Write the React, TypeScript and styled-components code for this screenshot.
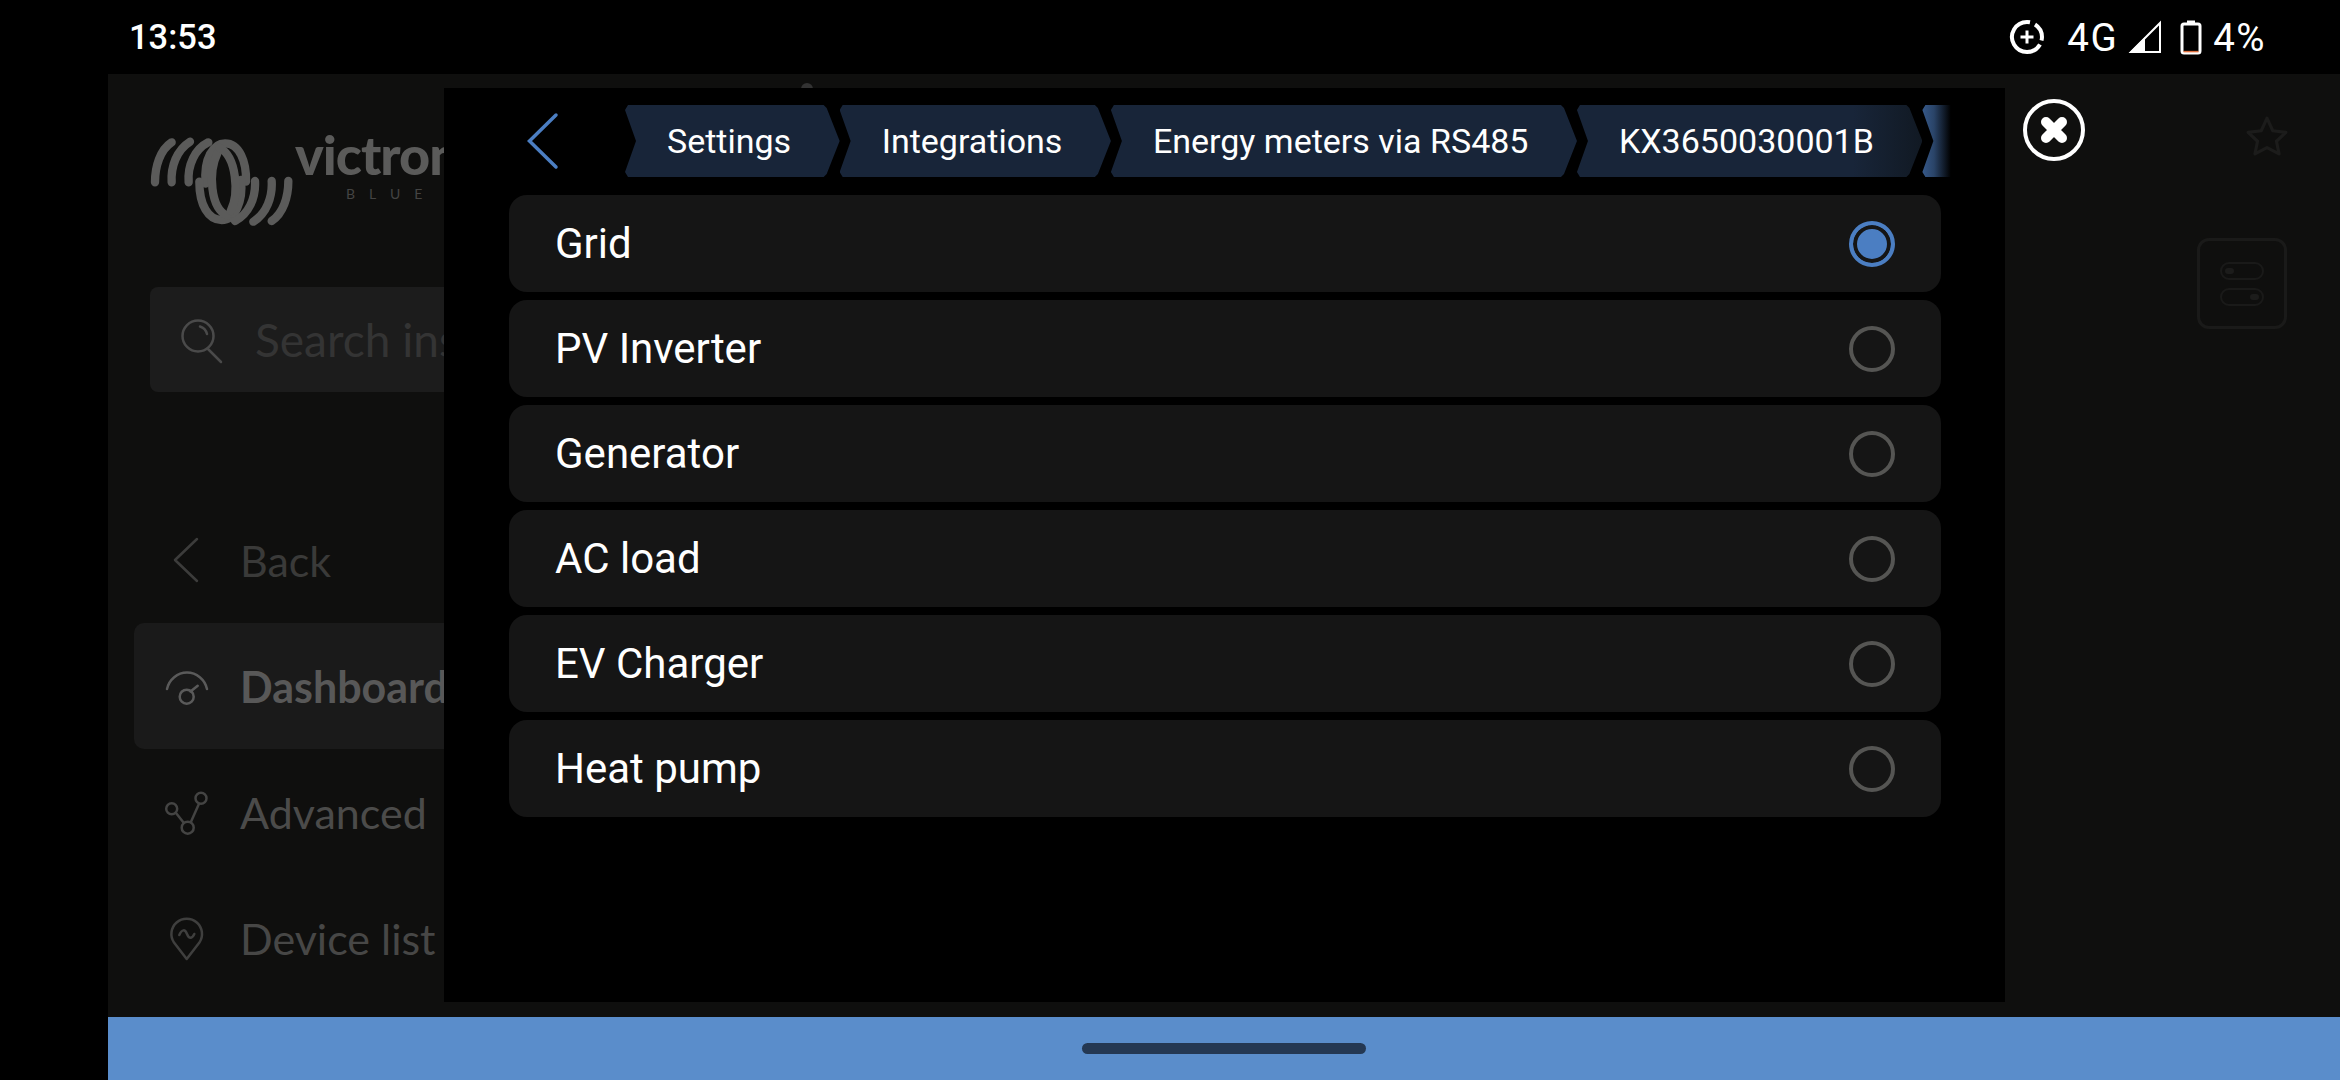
import styled, { createGlobalStyle } from "styled-components";

const GlobalStyle = createGlobalStyle`
  html, body {
    margin: 0;
    background: #000;
    font-family: "Roboto", "Liberation Sans", sans-serif;
  }
`;

const crumbs = ["Settings", "Integrations", "Energy meters via RS485", "KX3650030001B"];
const options = ["Grid", "PV Inverter", "Generator", "AC load", "EV Charger", "Heat pump"];

export default function App() {
  return (
    <Screen>
      <GlobalStyle />
      <StatusBar>
        <Clock>13:53</Clock>
        <StatusIcons>
          <svg width="36" height="36" viewBox="0 0 36 36" fill="none" stroke="#fff">
            <path d="M21 3.3A15 15 0 0 0 18 3 A15 15 0 1 0 31 25.5" strokeWidth="4" />
            <path d="M26 5.5A15 15 0 0 1 33 18 A15 15 0 0 1 32.5 21.5" strokeWidth="4" />
            <path d="M18 11.5V24.5M11.5 18H24.5" strokeWidth="3" />
          </svg>
          <NetworkLabel>4G</NetworkLabel>
          <SignalIcon width="34" height="34" viewBox="0 0 34 34">
            <path d="M1 33 17 17V33Z" fill="#fff" />
            <path d="M3 32 32 3V32Z" fill="none" stroke="#fff" strokeWidth="2" />
          </SignalIcon>
          <svg width="22" height="36" viewBox="0 0 22 36" fill="none">
            <path d="M7 1.5H15V4H7Z" fill="#fff" />
            <rect x="2" y="5" width="18" height="29" rx="2" stroke="#fff" strokeWidth="3" />
            <path d="M3.5 32.6H18.5" stroke="#e0703f" strokeWidth="1.5" />
          </svg>
          <BatteryLabel>4%</BatteryLabel>
        </StatusIcons>
      </StatusBar>

      <Main>
        <Sidebar>
          <LogoRow>
            <LogoMark width="155" height="110" viewBox="0 0 465 330" fill="none" stroke="#5b5b5a" strokeWidth="25" strokeLinecap="round">
              <path d="M45 172C45 125 60 75 95 52" />
              <path d="M95 172C92 125 110 75 150 50" />
              <path d="M146 172C142 120 165 72 205 52" />
              <path d="M197 176C190 100 220 55 255 55C298 55 320 110 318 170" />
              <path d="M178 170C178 240 205 285 245 285C285 285 310 230 303 165" />
              <path d="M232 85C205 140 210 250 262 272" />
              <path d="M272 258C298 205 290 95 238 68" />
              <path d="M445 168C445 215 430 265 395 288" />
              <path d="M395 168C398 215 380 265 340 290" />
              <path d="M345 168C348 220 325 268 285 288" />
            </LogoMark>
            <Wordmark>
              <WordmarkName>victron</WordmarkName>
              <WordmarkTag>BLUE</WordmarkTag>
            </Wordmark>
          </LogoRow>

          <SearchBox>
            <SearchIcon width="48" height="48" viewBox="0 0 48 48" fill="none" stroke="#4a4a4a" strokeWidth="2.5" strokeLinecap="round">
              <circle cx="19" cy="20" r="15.5" />
              <path d="M29 33 42 46" />
              <path d="M21 10.5C24.500 11.500 27 14 28 18" />
            </SearchIcon>
            <SearchText>Search ins</SearchText>
          </SearchBox>

          <NavList>
            <NavItem>
              <NavIcon viewBox="0 0 58 58" $tone="#3c3c3b">
                <path d="M39 8 17 29 39 50" />
              </NavIcon>
              <NavLabel $tone="#3a3a39">Back</NavLabel>
            </NavItem>
            <NavItem $active>
              <NavIcon viewBox="0 0 58 58" $tone="#5a5a5a">
                <path d="M9 32A20.500 21 0 0 1 49 32" />
                <circle cx="28.700" cy="39.700" r="7" />
                <path d="M32.500 34.500 39.700 28.700" />
              </NavIcon>
              <NavLabel $tone="#585858" $bold>Dashboard</NavLabel>
            </NavItem>
            <NavItem>
              <NavIcon viewBox="0 0 58 58" $tone="#444443">
                <circle cx="13.700" cy="25.700" r="5.500" />
                <circle cx="43" cy="15.300" r="5.500" />
                <circle cx="29.700" cy="44.700" r="6" />
                <path d="M18 30 25.500 39.500M33 38.700 41 20.700" />
              </NavIcon>
              <NavLabel $tone="#4b4b4a">Advanced</NavLabel>
            </NavItem>
            <NavItem>
              <NavIcon viewBox="0 0 58 58" $tone="#3f3f3e">
                <path d="M28.700 50 16 33.500A15.300 15.300 0 1 1 41.400 33.500Z" />
                <path d="M21.300 26C24 20 27 20 29 25C31 30 34 30 36.300 25" />
              </NavIcon>
              <NavLabel $tone="#474746">Device list</NavLabel>
            </NavItem>
          </NavList>
        </Sidebar>

        <ToolColumn>
          <svg width="42" height="40" viewBox="0 0 40 38" fill="none" stroke="#1c1c1b" strokeWidth="3" strokeLinejoin="round">
            <path d="M20 2 25.500 14 38 15.500 29 24 31.500 36 20 30 8.500 36 11 24 2 15.500 14.500 14Z" />
          </svg>
          <ToolTile>
            <ToolSwitch $on={false} />
            <ToolSwitch $on />
          </ToolTile>
        </ToolColumn>

        <ShadowDot />

        <Modal>
          <Header>
            <svg width="40" height="60" viewBox="0 0 40 60" fill="none" stroke="#4b7ec2" strokeWidth="3.500" strokeLinecap="round">
              <path d="M29 4 2.500 30 29 56" />
            </svg>
            <Trail>
              {crumbs.map((label, index) => (
                <Crumb key={label} $fading={index === crumbs.length - 1}>
                  {label}
                </Crumb>
              ))}
              <LastCrumb />
            </Trail>
          </Header>

          <OptionList>
            {options.map((label, index) => (
              <Option key={label}>
                <OptionLabel>{label}</OptionLabel>
                <Radio $checked={index === 0} />
              </Option>
            ))}
          </OptionList>
        </Modal>

        <CloseButton>
          <svg width="62" height="62" viewBox="0 0 62 62" fill="none" stroke="#fff" strokeLinecap="round">
            <circle cx="31" cy="31" r="29" strokeWidth="4" />
            <path d="M23 23 39 39M39 23 23 39" strokeWidth="10" />
          </svg>
        </CloseButton>
      </Main>

      <NavBar>
        <HomePill />
      </NavBar>
    </Screen>
  );
}

const Screen = styled.div`
  width: 2340px;
  height: 1080px;
  display: flex;
  flex-direction: column;
  overflow: hidden;
  background: #000;
`;

const StatusBar = styled.div`
  height: 74px;
  flex-shrink: 0;
  display: flex;
  align-items: center;
  justify-content: space-between;
  padding: 0 74px 0 129px;
  color: #fff;
`;

const Clock = styled.span`
  font-size: 34.500px;
  font-weight: 500;
`;

const StatusIcons = styled.div`
  display: flex;
  align-items: center;
`;

const NetworkLabel = styled.span`
  font-size: 38.500px;
  font-weight: 400;
  letter-spacing: 1.500px;
  margin: 0 10px 0 22px;
`;

const SignalIcon = styled.svg`
  margin-right: 18px;
`;

const BatteryLabel = styled.span`
  font-size: 38.500px;
  font-weight: 400;
  letter-spacing: 1.500px;
  margin-left: 11px;
`;

const Main = styled.div`
  position: relative;
  flex: 1;
  margin-left: 108px;
  display: flex;
  justify-content: space-between;
  overflow: hidden;
  background: #0f0f0e;
`;

const Sidebar = styled.div`
  width: 336px;
  box-sizing: border-box;
  padding: 51px 0 0 26px;
  display: flex;
  flex-direction: column;
  overflow: hidden;
  font-family: "Lato", "Open Sans", sans-serif;
`;

const LogoRow = styled.div`
  height: 110px;
  margin-left: 6px;
  display: flex;
`;

const LogoMark = styled.svg`
  flex-shrink: 0;
`;

const Wordmark = styled.div`
  flex-shrink: 0;
  display: flex;
  flex-direction: column;
`;

const WordmarkName = styled.span`
  font-size: 54px;
  line-height: 60px;
  font-weight: 900;
  letter-spacing: -1px;
  color: #5b5b5a;
`;

const WordmarkTag = styled.span`
  margin: 0 0 0 51px;
  font-size: 14px;
  line-height: 18px;
  letter-spacing: 14px;
  color: #444443;
`;

const SearchBox = styled.div`
  height: 105px;
  margin: 52px 0 0 16px;
  padding-left: 29px;
  display: flex;
  align-items: center;
  gap: 28px;
  border-radius: 8px 0 0 8px;
  background: #1c1c1c;
`;

const SearchIcon = styled.svg`
  flex-shrink: 0;
`;

const SearchText = styled.span`
  font-size: 46px;
  font-weight: 400;
  white-space: nowrap;
  color: #343434;
`;

const NavList = styled.div`
  margin-top: 105px;
  display: flex;
  flex-direction: column;
`;

const NavItem = styled.div<{ $active?: boolean }>`
  height: 126px;
  padding-left: 24px;
  display: flex;
  align-items: center;
  gap: 24px;
  border-radius: 10px 0 0 10px;
  background: ${(p) => (p.$active ? "#1a1a1a" : "transparent")};
`;

const NavIcon = styled.svg<{ $tone: string }>`
  width: 58px;
  height: 58px;
  flex-shrink: 0;
  fill: none;
  stroke: ${(p) => p.$tone};
  stroke-width: 2.5;
  stroke-linecap: round;
  stroke-linejoin: round;
`;

const NavLabel = styled.span<{ $tone: string; $bold?: boolean }>`
  font-size: 43px;
  font-weight: ${(p) => (p.$bold ? 700 : 400)};
  white-space: nowrap;
  color: ${(p) => p.$tone};
`;

const ToolColumn = styled.div`
  padding: 42px 52px 0 0;
  display: flex;
  flex-direction: column;
  align-items: flex-end;
  gap: 82px;
`;

const ToolTile = styled.div`
  width: 90px;
  height: 91px;
  margin-right: 1px;
  box-sizing: border-box;
  padding-top: 21px;
  display: flex;
  flex-direction: column;
  align-items: center;
  gap: 8px;
  border: 3px solid #1a1a19;
  border-radius: 12px;
`;

const ToolSwitch = styled.div<{ $on: boolean }>`
  width: 44px;
  height: 18px;
  box-sizing: border-box;
  padding: 0 3px;
  display: flex;
  align-items: center;
  justify-content: ${(p) => (p.$on ? "flex-end" : "flex-start")};
  border: 2px solid #1a1a19;
  border-radius: 9px;

  &:after {
    content: "";
    width: 9px;
    height: 6px;
    border-radius: 3px;
    background: #1c1c1b;
  }
`;

const ShadowDot = styled.div`
  position: absolute;
  left: 693px;
  top: 9px;
  width: 12px;
  height: 12px;
  border-radius: 50%;
  background: #333;
`;

const Modal = styled.div`
  position: absolute;
  left: 336px;
  top: 14px;
  width: 1561px;
  height: 914px;
  box-sizing: border-box;
  padding-top: 17px;
  background: #000;
  display: flex;
  flex-direction: column;
`;

const Header = styled.div`
  height: 72px;
  padding-left: 83px;
  display: flex;
  align-items: center;
`;

const Trail = styled.div`
  width: 1326px;
  margin-left: 58px;
  display: flex;
  overflow: hidden;
`;

const Crumb = styled.div<{ $fading?: boolean }>`
  height: 72px;
  flex-shrink: 0;
  padding: 0 48.500px 0 42px;
  display: flex;
  align-items: center;
  font-size: 34px;
  white-space: nowrap;
  color: #fff;
  background: ${(p) =>
    p.$fading ? "linear-gradient(90deg, #182539 80%, #111923 100%)" : "#182539"};
  clip-path: polygon(
    3px 0,
    calc(100% - 16px) 0,
    calc(100% - 13px) 3px,
    100% 50%,
    calc(100% - 13px) calc(100% - 3px),
    calc(100% - 16px) 100%,
    3px 100%,
    0 calc(100% - 5px),
    11px 50%,
    0 5px
  );
`;

const LastCrumb = styled.div`
  height: 72px;
  width: 60px;
  flex-shrink: 0;
  background: linear-gradient(90deg, #36598a 0, #2a4468 20%, #000 48%);
  clip-path: polygon(3px 0, 100% 0, 100% 100%, 3px 100%, 0 calc(100% - 5px), 11px 50%, 0 5px);
`;

const OptionList = styled.div`
  margin: 18px 64px 0 65px;
  display: flex;
  flex-direction: column;
  gap: 8px;
`;

const Option = styled.div`
  height: 97px;
  padding: 0 46px 0 46px;
  display: flex;
  align-items: center;
  justify-content: space-between;
  border-radius: 18px;
  background: #151515;
`;

const OptionLabel = styled.span`
  font-size: 42px;
  color: #fff;
`;

const Radio = styled.div<{ $checked: boolean }>`
  width: 46px;
  height: 46px;
  box-sizing: border-box;
  border: 4px solid ${(p) => (p.$checked ? "#4b7ec2" : "#555553")};
  border-radius: 50%;
  background: ${(p) => (p.$checked ? "#4b7ec2" : "transparent")};
  box-shadow: ${(p) => (p.$checked ? "inset 0 0 0 4px #151515" : "none")};
`;

const CloseButton = styled.div`
  position: absolute;
  left: 1915px;
  top: 25px;
  width: 62px;
  height: 62px;
`;

const NavBar = styled.div`
  height: 63px;
  flex-shrink: 0;
  margin-left: 108px;
  padding-top: 26px;
  box-sizing: border-box;
  display: flex;
  justify-content: center;
  background: #5a8dcb;
`;

const HomePill = styled.div`
  width: 284px;
  height: 11px;
  border-radius: 6px;
  background: #243853;
`;
